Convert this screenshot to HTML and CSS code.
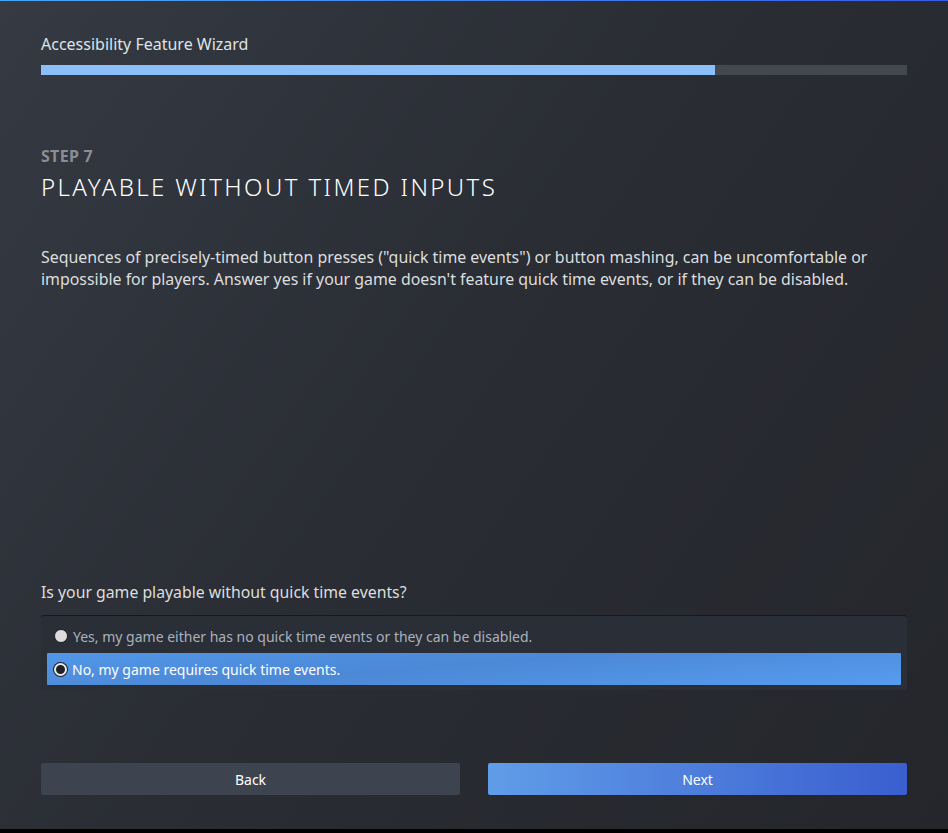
FILE: index.html
```html
<!DOCTYPE html>
<html lang="en">
<head>
    <meta charset="UTF-8">
    <title>Accessibility Feature Wizard</title>
    <link rel="stylesheet" href="styles.css">
</head>
<body>
    <div class="wizard">
        <div class="wizard-header">
            <div class="wizard-title">Accessibility Feature Wizard</div>
            <div class="progress">
                <div class="progress-fill" style="width: 77.8%"></div>
            </div>
        </div>

        <div class="step">
            <div class="step-label">STEP 7</div>
            <h1 class="step-title">PLAYABLE WITHOUT TIMED INPUTS</h1>
            <p class="step-desc">Sequences of precisely-timed button presses ("quick time events") or button mashing, can be uncomfortable or impossible for players. Answer yes if your game doesn't feature quick time events, or if they can be disabled.</p>
        </div>

        <div class="question">
            <div class="question-text">Is your game playable without quick time events?</div>
            <div class="options">
                <div class="option">
                    <span class="radio"></span>
                    <span>Yes, my game either has no quick time events or they can be disabled.</span>
                </div>
                <div class="option selected">
                    <span class="radio"></span>
                    <span>No, my game requires quick time events.</span>
                </div>
            </div>
        </div>

        <div class="actions">
            <button class="btn btn-back">Back</button>
            <button class="btn btn-next">Next</button>
        </div>
    </div>
    <div class="bottom-strip"></div>
</body>
</html>
```

FILE: styles.css
```css
html, body {
    margin: 0;
    padding: 0;
    background: #000;
}
body {
    font-family: "Noto Sans", "Open Sans", Arial, sans-serif;
    color: #dcdedf;
}
.wizard {
    height: 829px;
    box-sizing: border-box;
    border-top: 1px solid #4a9ff0;
    border-image: linear-gradient(90deg, #4aa6f4, #3b5ee6) 1;
    background: linear-gradient(125deg, #353a43 0%, #2a2d34 45%, #24262b 100%);
    padding: 0 41px;
    display: flex;
    flex-direction: column;
}
.wizard-header {
    padding-top: 33px;
}
.wizard-title {
    font-size: 16px;
    line-height: 20px;
    color: #dfe3e6;
}
.progress {
    margin-top: 11px;
    height: 10px;
    background: #43484d;
}
.progress-fill {
    height: 100%;
    background: #8bbff9;
}
.step {
    padding-top: 71px;
}
.step-label {
    font-size: 16px;
    font-weight: bold;
    letter-spacing: 0.3px;
    color: #8b8d90;
    line-height: 20px;
}
.step-title {
    margin: 6px 0 0;
    font-size: 24px;
    font-weight: 300;
    letter-spacing: 2.4px;
    color: #ffffff;
    line-height: 30px;
}
.step-desc {
    margin: 44px 0 0;
    font-size: 15.9px;
    line-height: 22px;
    color: #dcdedf;
}
.question {
    margin-top: auto;
}
.question-text {
    font-size: 15.8px;
    line-height: 22px;
    color: #dcdedf;
}
.options {
    margin-top: 12px;
    background: #2a2e37;
    border-top: 1px solid #16181c;
    border-radius: 3px;
    padding: 4px 6px 5px;
    display: flex;
    flex-direction: column;
    gap: 1px;
}
.option {
    display: flex;
    align-items: center;
    gap: 5px;
    height: 32px;
    padding: 0 7px;
    font-size: 14px;
    color: #a9b2bd;
}
.option.selected {
    background: linear-gradient(175deg, #5197e8 0%, #4c88d6 45%, #569cf0 100%);
    color: #ffffff;
    border-radius: 1px;
}
.radio {
    width: 12px;
    height: 12px;
    border-radius: 50%;
    border: 1px solid #1a1c20;
    background: #dcdcdc;
    flex: none;
}
.option.selected .radio {
    width: 9px;
    height: 9px;
    border: 2px solid #e6e8ea;
    background: #1f2124;
    box-shadow: 0 0 0 1px #202226;
}
.actions {
    display: flex;
    gap: 28px;
    margin-top: 73px;
    margin-bottom: 34px;
}
.btn {
    flex: 1;
    height: 32px;
    border: none;
    border-radius: 2px;
    font-family: inherit;
    font-size: 14px;
    color: #ffffff;
    cursor: pointer;
}
.btn-back {
    background: #3d4450;
}
.btn-next {
    background: linear-gradient(90deg, #609de8 0%, #3a5ecf 100%);
}
.bottom-strip {
    height: 4px;
    background: #000;
}
```
